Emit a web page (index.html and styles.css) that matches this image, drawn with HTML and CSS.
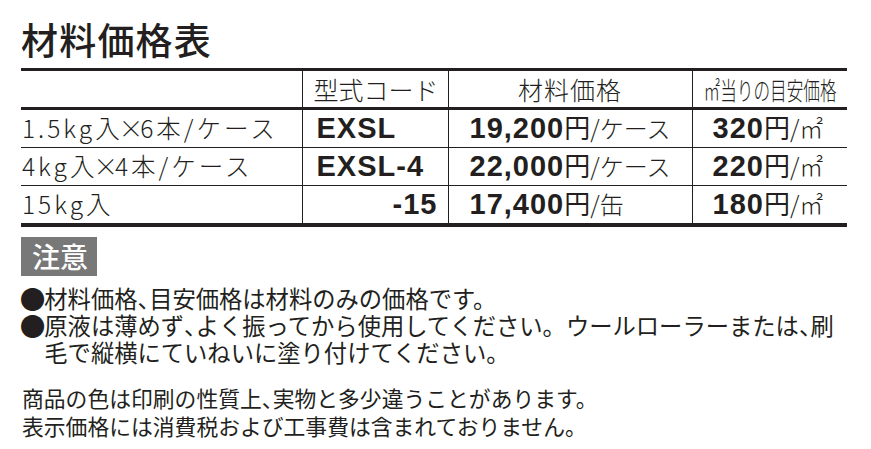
FILE: index.html
```html
<!DOCTYPE html>
<html lang="ja">
<head>
<meta charset="utf-8">
<title>材料価格表</title>
<link rel="stylesheet" href="styles.css">
</head>
<body>
<div class="page">
  <h1 class="title">材料価格表</h1>
  <table class="price">
    <colgroup>
      <col class="w1"><col class="w2"><col class="w3"><col class="w4">
    </colgroup>
    <thead>
      <tr>
        <th class="c1"></th>
        <th class="c2">型式コード</th>
        <th class="c3 center">材料価格</th>
        <th class="c4 center"><span class="cond">㎡当りの目安価格</span></th>
      </tr>
    </thead>
    <tbody>
      <tr>
        <td class="c1">1.5kg<span class="tight">入</span><span class="x">×</span>6本/ケース</td>
        <td class="c2"><span class="num">EXSL</span></td>
        <td class="c3"><span class="num">19,200</span><span class="yen">円</span><span class="unit">/ケース</span></td>
        <td class="c4"><span class="num">320</span><span class="yen">円</span><span class="unit">/㎡</span></td>
      </tr>
      <tr>
        <td class="c1">4kg<span class="tight">入</span><span class="x">×</span>4本/ケース</td>
        <td class="c2"><span class="num">EXSL-4</span></td>
        <td class="c3"><span class="num">22,000</span><span class="yen">円</span><span class="unit">/ケース</span></td>
        <td class="c4"><span class="num">220</span><span class="yen">円</span><span class="unit">/㎡</span></td>
      </tr>
      <tr>
        <td class="c1">15kg入</td>
        <td class="c2 right"><span class="num">-15</span></td>
        <td class="c3"><span class="num">17,400</span><span class="yen">円</span><span class="unit">/缶</span></td>
        <td class="c4"><span class="num">180</span><span class="yen">円</span><span class="unit">/㎡</span></td>
      </tr>
    </tbody>
  </table>
  <div class="notice"><span class="badge">注意</span></div>
  <ul class="notes">
    <li><span class="dot">●</span>材料価格<span class="half">、</span>目安価格は材料のみの価格です。</li>
    <li><span class="dot">●</span>原液は薄めず<span class="half">、</span>よく振ってから使用してください。ウールローラーまたは<span class="half">、</span>刷毛で縦横にていねいに塗り付けてください。</li>
  </ul>
  <p class="fine">商品の色は印刷の性質上<span class="half">、</span>実物と多少違うことがあります。<br>表示価格には消費税および工事費は含まれておりません。</p>
</div>
</body>
</html>
```
FILE: styles.css
```css
html, body {
  margin: 0;
  padding: 0;
  background: #ffffff;
}
body {
  color: #231f20;
  font-family: "Noto Sans CJK JP", "Noto Sans", sans-serif;
}
.page {
  width: 871px;
  padding-left: 21px;
  box-sizing: border-box;
}
.title {
  margin: 0 0 10px 0;
  padding-top: 21px;
  font-size: 37px;
  line-height: 37px;
  font-weight: 500;
  letter-spacing: 1.2px;
}
.price {
  width: 826px;
  border-collapse: collapse;
  border-top: 3px solid #231f20;
  border-bottom: 4px solid #231f20;
  table-layout: fixed;
}
.w1 { width: 281px; }
.w2 { width: 146px; }
.w3 { width: 244px; }
.w4 { width: 155px; }
.price th, .price td {
  padding: 0;
  white-space: nowrap;
  vertical-align: middle;
  text-align: left;
  line-height: 1;
}
.price th {
  height: 36px;
  font-size: 25px;
  font-weight: 300;
  border-bottom: 3px solid #231f20;
}
.price td {
  height: 37px;
  border-bottom: 1px solid #231f20;
}
.price tbody tr:last-child td {
  border-bottom: 4px solid #231f20;
}
.price .c2, .price .c3, .price .c4 {
  border-left: 1px solid #231f20;
}
.price th.c2 { padding-left: 11px; }
.price th.center { text-align: center; }
.price th.c3 { letter-spacing: 1px; }
.cond {
  display: inline-block;
  transform: scaleX(0.665);
  margin: 0 -34px;
}
.price td.c1 {
  font-size: 24.5px;
  font-weight: 300;
  letter-spacing: 3px;
  padding-left: 1px;
}
.tight {
  letter-spacing: -1px;
}
.x {
  letter-spacing: -3px;
}
.price td.c2 { padding-left: 14px; }
.price td.c2.right { text-align: right; padding-right: 10px; padding-left: 0; }
.price td.c3 { padding-left: 21px; }
.price td.c4 { padding-left: 20px; }
.num {
  font-family: "Liberation Sans", Arial, sans-serif;
  font-weight: 700;
  font-size: 29px;
  letter-spacing: 1px;
}
.yen {
  font-size: 26px;
  font-weight: 400;
}
.unit {
  font-size: 24px;
  font-weight: 300;
}
.notice {
  margin-top: 10px;
  height: 39px;
}
.badge {
  display: inline-block;
  box-sizing: border-box;
  width: 76px;
  height: 39px;
  line-height: 39px;
  padding-left: 11px;
  background: #787878;
  color: #ffffff;
  font-size: 28px;
  font-weight: 500;
}
.notes {
  list-style: none;
  margin: 9px 0 0 0;
  padding: 0;
  width: 830px;
  font-size: 23.3px;
  line-height: 27px;
  font-weight: 400;
}
.notes li {
  padding-left: 1em;
  text-indent: -1em;
}
.dot {
  display: inline-block;
  width: 1em;
  text-indent: 0;
  transform: scale(1.1);
  transform-origin: 50% 55%;
}
.half {
  display: inline-block;
  width: 0.5em;
  text-indent: 0;
}
.fine {
  margin: 18px 0 0 1px;
  font-size: 21.8px;
  line-height: 28px;
  font-weight: 400;
}
```
